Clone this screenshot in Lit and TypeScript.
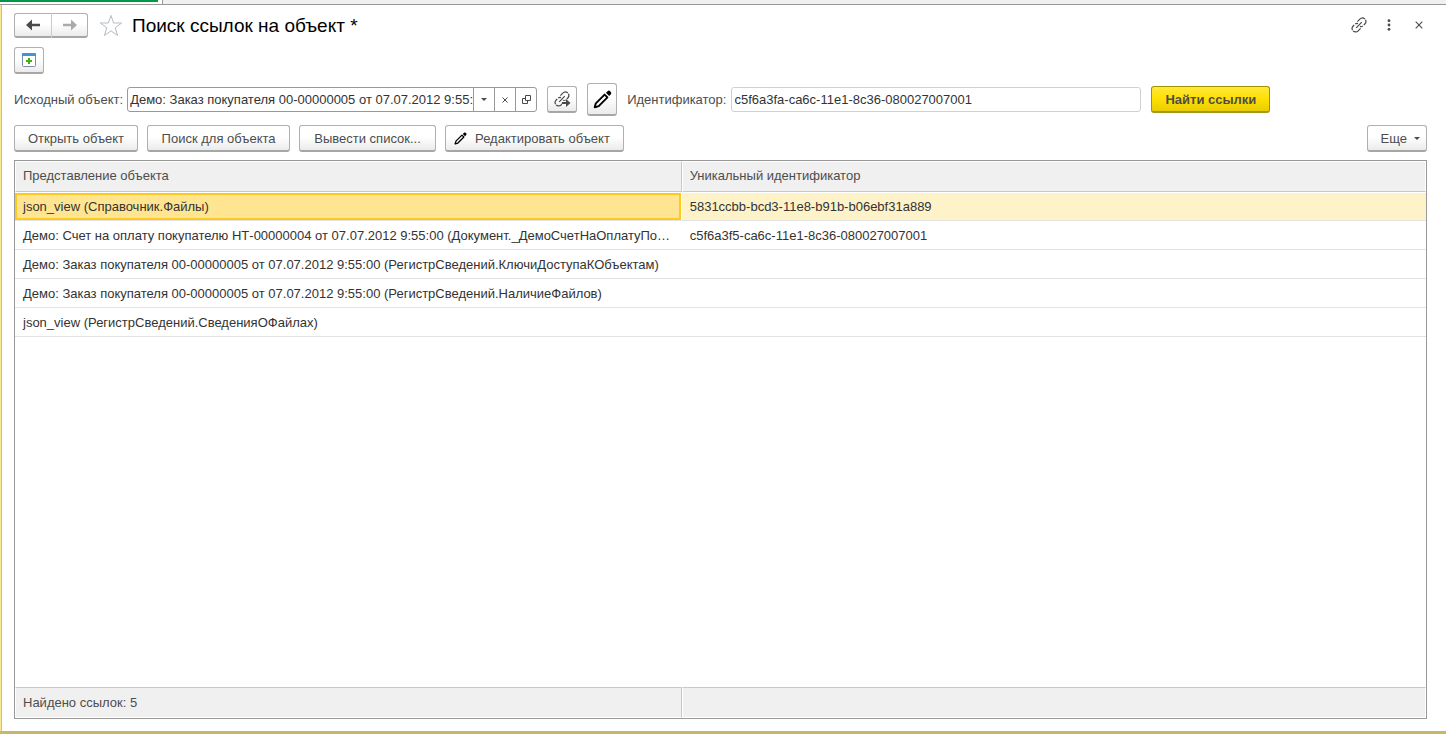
import { LitElement, html, css, svg } from "lit";
import { customElement, state } from "lit/decorators.js";
import { classMap } from "lit/directives/class-map.js";

interface FoundLink {
  name: string;
  uid: string;
}

const LINKS: FoundLink[] = [
  { name: "json_view (Справочник.Файлы)", uid: "5831ccbb-bcd3-11e8-b91b-b06ebf31a889" },
  {
    name: "Демо: Счет на оплату покупателю НТ-00000004 от 07.07.2012 9:55:00 (Документ._ДемоСчетНаОплатуПокупателю)",
    uid: "c5f6a3f5-ca6c-11e1-8c36-080027007001",
  },
  { name: "Демо: Заказ покупателя 00-00000005 от 07.07.2012 9:55:00 (РегистрСведений.КлючиДоступаКОбъектам)", uid: "" },
  { name: "Демо: Заказ покупателя 00-00000005 от 07.07.2012 9:55:00 (РегистрСведений.НаличиеФайлов)", uid: "" },
  { name: "json_view (РегистрСведений.СведенияОФайлах)", uid: "" },
];

const chain = svg`
  <g fill="none" stroke="#4a4a4a" stroke-width="1.2">
    <path d="M5.2 10.8 10.8 5.2"/>
    <path d="M6.4 4.6 8.8 2.2C10.2.8 12.4.6 13.8 2"/>
    <path d="M14.4 2.8C15.3 4.2 15 5.8 13.8 7L12.8 8M11.8 8.9C11 9.5 10 9.7 9 9.4"/>
    <path d="M9.6 11.4 7.2 13.8C5.8 15.2 3.6 15.4 2.2 14"/>
    <path d="M1.6 13.2C.7 11.8 1 10.2 2.2 9L3.2 8M4.2 7.1C5 6.5 6 6.3 7 6.6"/>
  </g>`;

const pencil = (size: number) => html`
  <svg width=${size} height=${size} viewBox="0 0 20 20" aria-hidden="true">
    <path fill="#fff" stroke="#000" stroke-width="2" stroke-linejoin="round" d="M1.8 18.2 3 14 12.2 4.8 15.2 7.8 6 17Z"/>
    <path fill="#000" d="M1 19 2 15.4 4.6 18ZM13.6 3 15.4 1.2a2 2 0 0 1 2.6 0l.8.8a2 2 0 0 1 0 2.6l-1.8 1.8Z"/>
  </svg>`;

@customElement("app-root")
export class AppRoot extends LitElement {
  @state() private selected = 0;

  static styles = css`
    :host {
      display: flex;
      flex-direction: column;
      box-sizing: border-box;
      height: 100vh;
      font: 13px/16px "Liberation Sans", Arial, sans-serif;
      color: #4d4d4d;
      background: #fff;
      border-bottom: 3px solid #c8b866;
    }
    * { box-sizing: border-box; }
    svg { display: block; flex: none; }
    button, input { font: inherit; color: inherit; margin: 0; }
    .tabs { display: flex; height: 5px; flex: none; border-bottom: 1px solid #999; background: #f0f0f0; }
    .tab { width: 163px; background: #fff; border-right: 1px solid #999; }
    .mark { width: 158px; height: 2px; background: #009846; }
    .form {
      flex: 1;
      min-height: 0;
      display: flex;
      flex-direction: column;
      border-left: 1px solid #fae896;
      box-shadow: inset 1px 0 #cfc07a;
      padding: 8px 19px 12px 13px;
    }
    .head { display: flex; align-items: center; height: 25px; }
    .nav { display: flex; height: 25px; }
    .btn {
      display: flex;
      align-items: center;
      justify-content: center;
      height: 27px;
      padding: 1px 13px 0;
      border: 1px solid #b0b0b0;
      border-bottom: 2px solid #a6a6a6;
      border-radius: 3px;
      background: linear-gradient(#fff 45%, #ebebeb);
      white-space: nowrap;
    }
    .nav .btn { width: 36px; height: 25px; padding: 0; }
    .nav .back { width: 38px; border-radius: 3px 0 0 3px; border-right-color: #ccc; }
    .nav .next { border-left: 0; border-radius: 0 3px 3px 0; }
    .plain { display: flex; align-items: center; justify-content: center; padding: 0; border: 0; background: none; }
    .star { margin-left: 11px; }
    h1 { margin: 0 0 0 9px; font-size: 19px; line-height: 24px; font-weight: 400; color: #000; }
    .tools { align-self: flex-start; margin: 2px -2px 0 auto; display: flex; gap: 10px; }
    .tools .plain { width: 20px; height: 20px; }
    .icon { width: 30px; padding: 0; }
    .add { margin-top: 9px; }
    .source { display: flex; align-items: center; height: 33px; margin-top: 9px; }
    .gap { margin-left: 10px; }
    .edit { height: 33px; }
    .combo {
      display: flex;
      flex: 0 1 410px;
      min-width: 0;
      height: 25px;
      margin-left: 4px;
      border: 1px solid #999;
      border-radius: 3px;
      background: #fff;
      overflow: hidden;
    }
    .combo input { flex: 1; min-width: 0; border: 0; padding: 0 0 0 2px; outline: 0; color: #333; background: none; }
    .combo .plain { width: 21px; border-left: 1px solid #999; }
    .uid {
      flex: 0 1 410px;
      min-width: 0;
      height: 25px;
      margin-left: 5px;
      padding: 0 2px;
      border: 1px solid #d0d0d0;
      border-radius: 3px;
      color: #333;
    }
    .find {
      border: 1px solid #a39200;
      border-bottom: 2px solid #a39720;
      background: linear-gradient(#ffe83b, #ffe000 50%, #e8cd00);
      font-weight: 700;
      color: #4d4d4d;
    }
    .actions { display: flex; gap: 9px; margin-top: 9px; }
    .actions .lookup { min-width: 143px; }
    .actions .list { min-width: 137px; }
    .actions .pen { padding-left: 8px; gap: 8px; }
    .actions .more { margin-left: auto; padding: 1px 6px 0 13px; gap: 7px; }
    .frame { flex: 1; min-height: 0; margin-top: 8px; border: 1px solid #999; }
    table { width: 100%; height: 100%; table-layout: fixed; border-collapse: separate; border-spacing: 0; }
    .c1 { width: 47.25%; }
    th, td { padding: 1px 8px 0; text-align: left; font-weight: 400; overflow: hidden; white-space: nowrap; text-overflow: ellipsis; }
    th, tfoot td { height: 31px; background: #f0f0f0; border: 1px solid #fff; padding: 0 7px; }
    thead th { border-bottom: 1px solid #c8c8c8; padding-bottom: 2px; }
    tfoot td { border-top: 1px solid #c8c8c8; }
    th:first-child, tfoot td:first-child { border-right-color: #c8c8c8; }
    tbody td { height: 29px; border-bottom: 1px solid #e2e2e2; color: #333; }
    tbody .rest td { height: auto; border: 0; }
    tbody .on td { background: #fef2c8; background-clip: padding-box; border-top: 1px solid #fff; padding-top: 0; }
    tbody .on td:first-child { background-color: #ffe591; border-right: 1px solid #fff; box-shadow: inset 0 0 0 2px #fbc91f; }
  `;

  render() {
    return html`
      <div class="tabs"><div class="tab"><div class="mark"></div></div></div>
      <main class="form">
        <header class="head">
          <div class="nav">
            <button class="btn back" aria-label="Назад">
              <svg width="14" height="12" viewBox="0 0 14 12"><path fill="#4a4a4a" d="M0 6 6 .5V4.8H14V7.2H6V11.5Z"/></svg>
            </button>
            <button class="btn next" aria-label="Вперед">
              <svg width="14" height="12" viewBox="0 0 14 12"><path fill="#aaa" d="M14 6 8 .5V4.8H0V7.2H8V11.5Z"/></svg>
            </button>
          </div>
          <button class="plain star" aria-label="В избранное">
            <svg width="24" height="23" viewBox="0 0 24 23"><path fill="none" stroke="#b4bac2" d="M12 1.5 14.6 9H22.6L16.2 13.8 18.6 21.5 12 16.8 5.4 21.5 7.8 13.8 1.4 9H9.4Z"/></svg>
          </button>
          <h1>Поиск ссылок на объект *</h1>
          <div class="tools">
            <button class="plain" aria-label="Получить ссылку"><svg width="16" height="16" viewBox="0 0 16 16">${chain}</svg></button>
            <button class="plain" aria-label="Меню">
              <svg width="4" height="12" viewBox="0 0 4 12" fill="#4a4a4a"><circle cx="2" cy="1.7" r="1.4"/><circle cx="2" cy="6" r="1.4"/><circle cx="2" cy="10.3" r="1.4"/></svg>
            </button>
            <button class="plain" aria-label="Закрыть">
              <svg width="8" height="8" viewBox="0 0 8 8"><path stroke="#4a4a4a" stroke-width="1.1" d="M.7.7 7.3 7.3M7.3.7.7 7.3"/></svg>
            </button>
          </div>
        </header>

        <button class="btn icon add" aria-label="Добавить">
          <svg width="14" height="14" viewBox="0 0 14 14">
            <rect x=".5" y=".5" width="13" height="13" rx="1" fill="#fff" stroke="#7c8ea4"/>
            <path fill="#3f95dc" d="M0 1a1 1 0 0 1 1-1H13a1 1 0 0 1 1 1V3H0Z"/>
            <path fill="#45b010" d="M6 5H8V7H10V9H8V11H6V9H4V7H6Z"/>
          </svg>
        </button>

        <div class="source">
          <label for="src">Исходный объект:</label>
          <div class="combo">
            <input id="src" .value=${"Демо: Заказ покупателя 00-00000005 от 07.07.2012 9:55:00"} />
            <button class="plain" aria-label="Выбрать из списка"><svg width="6" height="3" viewBox="0 0 6 3"><path fill="#4a4a4a" d="M0 0H6L3 3Z"/></svg></button>
            <button class="plain" aria-label="Очистить"><svg width="6" height="6" viewBox="0 0 6 6"><path stroke="#4a4a4a" d="M.5.5 5.5 5.5M5.5.5.5 5.5"/></svg></button>
            <button class="plain" aria-label="Открыть"><svg width="9" height="9" viewBox="0 0 9 9"><path fill="none" stroke="#4a4a4a" d="M3.5.5H8.5V5.5H3.5ZM3.5 3.5H.5V8.5H5.5V5.5"/></svg></button>
          </div>
          <button class="btn icon gap" aria-label="Перейти по ссылке">
            <svg width="17" height="16" viewBox="0 0 17 16">${chain}<path fill="#f8f8f8" d="M8 9.8H17V16H8Z"/><path fill="#4a4a4a" d="M8 11H12V8L16.5 12 12 16V13H8Z"/></svg>
          </button>
          <button class="btn icon edit gap" aria-label="Редактировать">${pencil(19)}</button>
          <label class="gap" for="uid">Идентификатор:</label>
          <input class="uid" id="uid" readonly .value=${"c5f6a3fa-ca6c-11e1-8c36-080027007001"} />
          <button class="btn find gap">Найти ссылки</button>
        </div>

        <div class="actions">
          <button class="btn">Открыть объект</button>
          <button class="btn lookup">Поиск для объекта</button>
          <button class="btn list">Вывести список...</button>
          <button class="btn pen">${pencil(13)}Редактировать объект</button>
          <button class="btn more">Еще<svg width="6" height="3" viewBox="0 0 6 3"><path fill="#4a4a4a" d="M0 0H6L3 3Z"/></svg></button>
        </div>

        <div class="frame">
          <table>
            <colgroup><col class="c1" /><col /></colgroup>
            <thead>
              <tr><th>Представление объекта</th><th>Уникальный идентификатор</th></tr>
            </thead>
            <tbody>
              ${LINKS.map(
                (link, i) => html`<tr class=${classMap({ on: i === this.selected })} @click=${() => (this.selected = i)}>
                  <td>${link.name}</td><td>${link.uid}</td>
                </tr>`
              )}
              <tr class="rest"><td colspan="2"></td></tr>
            </tbody>
            <tfoot>
              <tr><td>Найдено ссылок: ${LINKS.length}</td><td></td></tr>
            </tfoot>
          </table>
        </div>
      </main>
    `;
  }
}
